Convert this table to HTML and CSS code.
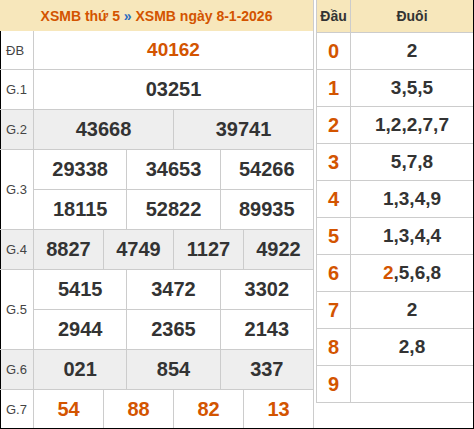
FILE: index.html
```html
<!DOCTYPE html>
<html lang="vi">
<head>
<meta charset="utf-8">
<title>XSMB ngày 8-1-2026</title>
<link rel="stylesheet" href="styles.css">
</head>
<body>
<div class="board">
  <div class="left">
    <div class="head">XSMB thứ 5 <span class="sep">»</span> XSMB ngày 8-1-2026</div>
    <div class="row first">
      <div class="lbl">ĐB</div>
      <div class="vals"><div class="line h38"><div class="cell db">40162</div></div></div>
    </div>
    <div class="row">
      <div class="lbl">G.1</div>
      <div class="vals"><div class="line"><div class="cell">03251</div></div></div>
    </div>
    <div class="row grey">
      <div class="lbl">G.2</div>
      <div class="vals"><div class="line"><div class="cell">43668</div><div class="cell">39741</div></div></div>
    </div>
    <div class="row">
      <div class="lbl">G.3</div>
      <div class="vals">
        <div class="line"><div class="cell">29338</div><div class="cell">34653</div><div class="cell">54266</div></div>
        <div class="line"><div class="cell">18115</div><div class="cell">52822</div><div class="cell">89935</div></div>
      </div>
    </div>
    <div class="row grey">
      <div class="lbl">G.4</div>
      <div class="vals"><div class="line"><div class="cell">8827</div><div class="cell">4749</div><div class="cell">1127</div><div class="cell">4922</div></div></div>
    </div>
    <div class="row">
      <div class="lbl">G.5</div>
      <div class="vals">
        <div class="line"><div class="cell">5415</div><div class="cell">3472</div><div class="cell">3302</div></div>
        <div class="line"><div class="cell">2944</div><div class="cell">2365</div><div class="cell">2143</div></div>
      </div>
    </div>
    <div class="row grey">
      <div class="lbl">G.6</div>
      <div class="vals"><div class="line"><div class="cell">021</div><div class="cell">854</div><div class="cell">337</div></div></div>
    </div>
    <div class="row">
      <div class="lbl">G.7</div>
      <div class="vals"><div class="line h38"><div class="cell hot">54</div><div class="cell hot">88</div><div class="cell hot">82</div><div class="cell hot">13</div></div></div>
    </div>
  </div>
  <div class="right">
    <div class="kq">
      <div class="kq-head"><div class="dau">Đầu</div><div class="duoi">Đuôi</div></div>
      <div class="kq-row"><div class="dau">0</div><div class="duoi">2</div></div>
      <div class="kq-row"><div class="dau">1</div><div class="duoi">3,5,5</div></div>
      <div class="kq-row"><div class="dau">2</div><div class="duoi">1,2,2,7,7</div></div>
      <div class="kq-row"><div class="dau">3</div><div class="duoi">5,7,8</div></div>
      <div class="kq-row"><div class="dau">4</div><div class="duoi">1,3,4,9</div></div>
      <div class="kq-row"><div class="dau">5</div><div class="duoi">1,3,4,4</div></div>
      <div class="kq-row"><div class="dau">6</div><div class="duoi"><span class="hot">2</span>,5,6,8</div></div>
      <div class="kq-row"><div class="dau">7</div><div class="duoi">2</div></div>
      <div class="kq-row"><div class="dau">8</div><div class="duoi">2,8</div></div>
      <div class="kq-row"><div class="dau">9</div><div class="duoi"></div></div>
    </div>
  </div>
</div>
</body>
</html>
```

FILE: styles.css
```css
html, body {
  margin: 0;
  padding: 0;
  background: #fff;
}

body {
  font-family: "Liberation Sans", Arial, sans-serif;
  color: #333;
}

.board {
  display: flex;
  width: 474px;
  height: 429px;
  box-sizing: border-box;
  border-bottom: 1px solid #000;
}

/* left results table */
.left {
  width: 314px;
  box-sizing: border-box;
  border-right: 1px solid #ccc;
  display: flex;
  flex-direction: column;
}

.head {
  height: 31px;
  background: #f7e7bb;
  color: #d35400;
  font-weight: bold;
  font-size: 14px;
  display: flex;
  align-items: center;
  justify-content: center;
  white-space: pre;
}

.sep {
  color: #2a6cc0;
}

.row {
  display: flex;
  border-top: 1px solid #ccc;
}

.row.first {
  border-top: none;
}

.row.grey {
  background: #eee;
}

.lbl {
  width: 34px;
  box-sizing: border-box;
  border-left: 1px solid #000;
  border-right: 1px solid #ccc;
  padding-left: 5px;
  display: flex;
  align-items: center;
  font-size: 13px;
  color: #444;
}

.vals {
  flex: 1;
  display: flex;
  flex-direction: column;
}

.line {
  display: flex;
  height: 39px;
}

.line + .line {
  border-top: 1px solid #ccc;
}

.line.h38 {
  height: 38px;
}

.cell {
  flex: 1;
  display: flex;
  align-items: center;
  justify-content: center;
  font-weight: bold;
  font-size: 20px;
  color: #333;
}

.cell + .cell {
  border-left: 1px solid #ccc;
}

.cell.db {
  color: #d35400;
  font-size: 19px;
}

.hot {
  color: #d35400;
}

.cell.hot {
  color: #d35400;
}

/* right dau-duoi table */
.right {
  width: 158px;
  margin-left: 2px;
  box-sizing: border-box;
  border-right: 1px solid #000;
}

.kq {
  border-left: 1px solid #ccc;
  border-bottom: 1px solid #ccc;
}

.kq-head {
  display: flex;
  height: 32px;
  background: #f7e7bb;
  font-weight: bold;
  font-size: 14px;
  color: #333;
}

.kq-row {
  display: flex;
  height: 37px;
  box-sizing: border-box;
  border-top: 1px solid #ccc;
  font-weight: bold;
  font-size: 20px;
}

.kq-row .duoi {
  font-size: 19px;
}

.dau {
  width: 34px;
  box-sizing: border-box;
  border-right: 1px solid #ccc;
  display: flex;
  align-items: center;
  justify-content: center;
}

.kq-row .dau {
  color: #d35400;
}

.duoi {
  flex: 1;
  display: flex;
  align-items: center;
  justify-content: center;
  color: #333;
}
```
